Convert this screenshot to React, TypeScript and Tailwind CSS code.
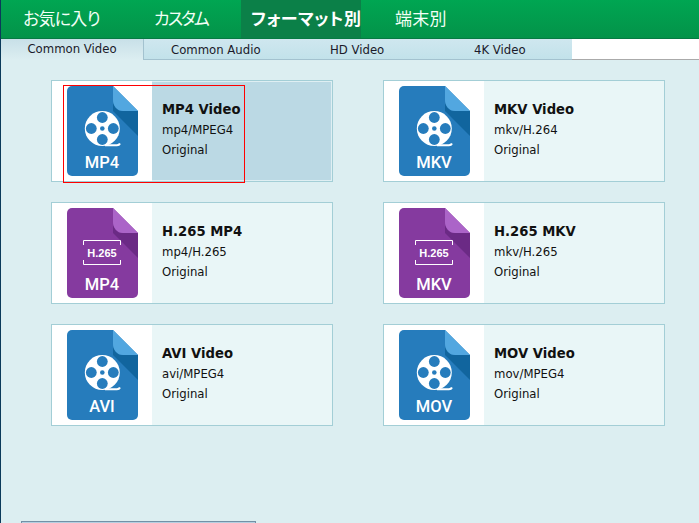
import React from "react";

const cjk = '"Noto Sans CJK JP", "Noto Sans", sans-serif';

function FileIcon({ label, purple }: { label: string; purple?: boolean }) {
  const base = purple ? "#853a9f" : "#267cbc";
  const fold = purple ? "#ab64c8" : "#52a7e0";
  const shadow = purple ? "#6b2a85" : "#11659e";
  return (
    <svg width="71" height="90" viewBox="0 0 71 90" className="block">
      <path d="M5 0H46L71 25V85a5 5 0 0 1-5 5H5a5 5 0 0 1-5-5V5a5 5 0 0 1 5-5Z" fill={base} />
      <path d="M46 14C46 20 50 25 56 25H71V50L46 25Z" fill={shadow} />
      <path d="M46 0L71 25H56C50 25 46 20 46 14Z" fill={fold} />
      {purple ? (
        <g>
          <path d="M16.5 37V32.5H53.5V37M16.5 52V56.5H53.5V52" fill="none" stroke="#fff" strokeWidth="1" />
          <text x="35" y="49" textAnchor="middle" fill="#fff" fontSize="11" fontWeight="700" style={{ fontFamily: '"Liberation Sans", sans-serif' }}>H.265</text>
        </g>
      ) : (
        <g>
          <circle cx="35.3" cy="42.5" r="17.5" fill="#fff" />
          <path d="M38 59.2H50C51.5 59.2 52.5 58.5 53 57.5" fill="none" stroke="#fff" strokeWidth="2" />
          <circle cx="35.3" cy="31.5" r="5.4" fill={base} />
          <circle cx="35.3" cy="53.5" r="5.4" fill={base} />
          <circle cx="24.3" cy="42.5" r="5.4" fill={base} />
          <circle cx="46.3" cy="42.5" r="5.4" fill={base} />
          <circle cx="35.3" cy="42.5" r="2.3" fill={base} />
        </g>
      )}
      <text x="35" y="82" textAnchor="middle" fill="#fff" fontSize="16.5" fontWeight="500" style={{ fontFamily: 'Roboto, sans-serif' }}>{label}</text>
    </svg>
  );
}

function Card({ title, sub, label, purple, selected }: { title: string; sub: string; label: string; purple?: boolean; selected?: boolean }) {
  return (
    <div className={`relative flex h-[102px] w-[282px] border border-[#a3ced6] ${selected ? "bg-[#bbd9e4] shadow-[inset_0_0_0_1px_#dfeff3]" : "bg-[#e9f6f7]"}`}>
      <div className="flex h-full w-[100px] bg-white pl-[15px] pt-[5px]">
        <FileIcon label={label} purple={purple} />
      </div>
      <div className="flex flex-col pl-[10px] pt-[18px] text-[11.7px] leading-[20.5px] text-[#111]">
        <div className="pt-[1px] text-[13.2px] font-bold leading-[19.5px]">{title}</div>
        <div>{sub}</div>
        <div>Original</div>
      </div>
      {selected && <div className="absolute left-[11px] top-[4px] h-[98px] w-[182px] border border-[#ff0000]" />}
    </div>
  );
}

export default function App() {
  const nav = [
    { t: "お気に入り", w: "w-[130px] pl-[22px] tracking-[-0.8px]" },
    { t: "カスタム", w: "w-[110px] pl-[23px] tracking-[-2px]" },
    { t: "フォーマット別", w: "w-[120px] pl-[10px] tracking-[0.5px]", active: true },
    { t: "端末別", w: "w-[96px] pl-[34px] tracking-[0.3px]" },
  ];
  return (
    <div className="flex h-[523px] w-[699px] flex-col overflow-hidden border-l border-[#0b3a5a] bg-[#dceef1]" style={{ fontFamily: '"DejaVu Sans", sans-serif' }}>
      <div className="flex h-[39px] shrink-0 border-b border-[#067a43] bg-gradient-to-b from-[#00a652] to-[#039349]" style={{ fontFamily: cjk, fontFeatureSettings: '"palt"' }}>
        {nav.map((n) => (
          <div key={n.t} className={`flex items-center whitespace-nowrap pb-[3px] text-[17px] ${n.w} ${n.active ? "bg-[#0b8048] font-bold text-white" : "text-[#f2fff6]"}`}>{n.t}</div>
        ))}
      </div>
      <div className="flex h-[21px] shrink-0 text-[11.7px] text-[#1a1a2a]">
        <div className="flex w-[142px] justify-center bg-gradient-to-b from-[#c8e0e8] to-[#dceef1] pt-[2px]">Common Video</div>
        <div className="flex w-[429px] border-b border-[#a3c2cf] border-l bg-gradient-to-b from-[#cfe7ef] to-[#c2e2ea] pt-[3px]">
          <span className="w-[115px] pl-[27px] whitespace-nowrap">Common Audio</span>
          <span className="w-[160px] pl-[71px] whitespace-nowrap">HD Video</span>
          <span className="pl-[55px] whitespace-nowrap">4K Video</span>
        </div>
        <div className="flex-1 border-b border-[#aaa] bg-white" />
      </div>
      <div className="grid grid-cols-[282px_282px] gap-x-[50px] gap-y-[20px] pl-[50px] pt-[20px]">
        <Card title="MP4 Video" sub="mp4/MPEG4" label="MP4" selected />
        <Card title="MKV Video" sub="mkv/H.264" label="MKV" />
        <Card title="H.265 MP4" sub="mp4/H.265" label="MP4" purple />
        <Card title="H.265 MKV" sub="mkv/H.265" label="MKV" purple />
        <Card title="AVI Video" sub="avi/MPEG4" label="AVI" />
        <Card title="MOV Video" sub="mov/MPEG4" label="MOV" />
      </div>
      <div className="ml-[20px] mt-auto h-[2px] w-[235px] border-t border-x border-[#7391a6] bg-[#b4cfe0]" />
    </div>
  );
}
